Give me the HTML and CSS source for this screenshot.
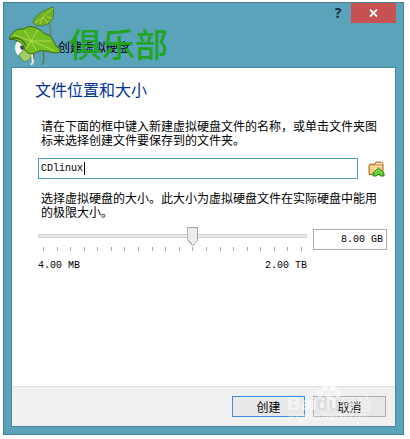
FILE: index.html
```html
<!DOCTYPE html>
<html lang="zh-CN">
<head>
<meta charset="utf-8">
<meta name="viewport" content="width=device-width, initial-scale=1">
<title>创建虚拟硬盘</title>
<link rel="stylesheet" href="styles.css">
</head>
<body>
<main class="window">
  <header class="titlebar">
    <h1 class="caption">创建虚拟硬盘</h1>
    <button class="help" type="button" aria-label="帮助">?</button>
    <button class="close" type="button" aria-label="关闭">
      <svg width="9" height="8" viewBox="0 0 9 8"><path d="M1 0.5L8 7.5M8 0.5L1 7.5" stroke="#fff" stroke-width="1.8"/></svg>
    </button>
    <div class="badge">
      <svg class="lotus" width="54" height="60" viewBox="0 0 54 60">
        <path d="M39 16C43 22 42 30 40 36" fill="none" stroke="#5c8a32" stroke-width="1.2"/>
        <path d="M24 18C26 10 33 6 44 2C45 9 45 15 39 19C34 21 28 22 24 18Z" fill="#72b222" stroke="#416713" stroke-width=".7"/>
        <path d="M25 18C31 16 36 10 44 3M39 18L34 12M31 19L34 12M38 12L43 13" fill="none" stroke="#b0d64b" stroke-width="1"/>
        <ellipse cx="12" cy="43" rx="6" ry="8" fill="#f4f7ed"/>
        <path d="M11 41q4 -2 4 3q-3 3 -4-3Z" fill="#3d4840"/>
        <path d="M10 51C13 44 18 43 22 47C23 54 18 58 14 56Z" fill="#a0cf65" stroke="#477324" stroke-width=".7"/>
        <path d="M34 47C35 52 36 55 33 60" fill="none" stroke="#55752b" stroke-width="1.2"/>
        <path d="M22 44L24 57L22 60" fill="none" stroke="#eee6ce" stroke-width="2"/>
        <path d="M24 44L25 54" fill="none" stroke="#806a40" stroke-width="1"/>
        <path d="M0 34C2 28 7 23 15 24C20 19 29 22 36 29C44 30 44 37 48 42C53 44 52 48 47 48C38 47 33 44 28 47C22 51 16 48 15 42C12 36 5 34 0 34Z" fill="#74bd21" stroke="#294d10" stroke-width=".8"/>
        <path d="M15 25L22 36L29 25M22 36L17 44M22 36L28 46M23 36L46 46M22 36L42 36M22 36L5 30" fill="none" stroke="#b5e052" stroke-width=".9"/>
        <path d="M1 34C8 31 14 34 17 41" fill="none" stroke="#385f16" stroke-width="1.2"/>
      </svg>
      <span class="club">俱乐部</span>
    </div>
  </header>

  <form class="dialog">
    <div class="page">
      <h2 class="heading">文件位置和大小</h2>
      <label class="note" for="location">请在下面的框中键入新建虚拟硬盘文件的名称，或单击文件夹图标来选择创建文件要保存到的文件夹。</label>
      <div class="file-row">
        <div class="field">
          <input class="location" id="location" type="text" value="CDlinux">
          <span class="caret"></span>
        </div>
        <button class="browse" type="button" aria-label="选择文件夹">
          <svg width="17" height="16" viewBox="0 0 17 16">
            <path d="M1 4V13.5H15V2.5L13 1H8L7 3H2Z" fill="#e9ae5b" stroke="#ae713c"/>
            <path d="M2 5H14V12.5H2Z" fill="#f8cd7b"/>
            <path d="M2 5.5H14M3 7.5H12" stroke="#ffe7b0"/>
            <path d="M8 2.5H14" stroke="#fff3d4"/>
            <path d="M5 12L10.5 7L16 12V15H12.5L10.5 13L8.5 15H5Z" fill="#5cc832" stroke="#278017"/>
            <path d="M7 12L10.5 9L14 12" fill="none" stroke="#a9ec74"/>
          </svg>
        </button>
      </div>
      <label class="note" for="slider">选择虚拟硬盘的大小。此大小为虚拟硬盘文件在实际硬盘中能用的极限大小。</label>
      <div class="size-row">
        <div class="scale">
          <input class="slider" id="slider" type="range" min="0" max="19" value="11">
          <div class="ticks">
            <i></i><i></i><i></i><i></i><i></i><i></i><i></i><i></i><i></i><i></i>
            <i></i><i></i><i></i><i></i><i></i><i></i><i></i><i></i><i></i><i></i>
          </div>
          <div class="limits"><span>4.00 MB</span><span>2.00 TB</span></div>
        </div>
        <input class="size" type="text" value="8.00 GB" aria-label="大小">
      </div>
    </div>
    <footer class="actions">
      <button class="action primary" type="button">创建</button>
      <button class="action" type="button">取消</button>
      <div class="watermark">
        <svg class="paw" width="26" height="28" viewBox="0 0 26 28" fill="#fff">
          <ellipse cx="4" cy="12" rx="3" ry="4"/><ellipse cx="9" cy="5" rx="3" ry="4"/>
          <ellipse cx="17" cy="5" rx="3" ry="4"/><ellipse cx="22" cy="12" rx="3" ry="4"/>
          <path d="M13 12C9 12 8 17 4 20C1 25 5 28 9 27H18C23 28 25 24 22 20C18 17 17 12 13 12Z"/>
        </svg>
        <span class="brand">Bai<span class="du">du</span><span class="suffix">经验</span></span>
        <span class="site">jingyan.baidu.com</span>
      </div>
    </footer>
  </form>
</main>
</body>
</html>
```
FILE: styles.css
```css
* { box-sizing: border-box; }

body {
  margin: 0;
  padding: 2px 6px 4px 3px;
  min-height: 100vh;
  display: flex;
  background: #fff;
  color: #000;
  font: 12px/14px "Noto Sans CJK SC", sans-serif;
}

button, input { margin: 0; font: inherit; color: inherit; border-radius: 0; }
h1, h2 { margin: 0; font-weight: 400; }

.window {
  flex: 1;
  display: flex;
  flex-direction: column;
  padding: 0 7px 7px;
  border: 1px solid #4b7f8d;
  background: #5ba3bb;
}

.titlebar {
  position: relative;
  display: flex;
  align-items: flex-start;
  height: 64px;
}

.caption { flex: 1; padding: 37px 0 0 47px; font-size: 12px; line-height: 14px; }

.help {
  width: 20px;
  height: 20px;
  margin-right: 3px;
  padding: 0;
  border: 0;
  background: none;
  color: #172c33;
  font: bold 14px/20px "Open Sans", sans-serif;
}

.close {
  display: flex;
  align-items: center;
  justify-content: center;
  width: 45px;
  height: 20px;
  padding: 0;
  border: 0;
  background: #c75050;
}

.badge { position: absolute; left: -2px; top: 2px; display: flex; }
.lotus { flex: none; }

.club {
  margin: 18px 0 0 6px;
  color: #1fa51f;
  font-size: 33px;
  font-weight: 500;
  line-height: 40px;
}

.dialog {
  flex: 1;
  display: flex;
  flex-direction: column;
  border: 1px solid #4b8798;
  background: #fff;
}

.page { flex: 1; padding: 11px 8px 0 26px; }

.heading {
  margin-left: -3px;
  color: #003399;
  font-size: 16px;
  line-height: 20px;
}

.note { display: block; margin: 20px 0 0 3px; padding-right: 8px; }

.file-row { display: flex; align-items: center; gap: 8px; margin-top: 11px; }
.file-row + .note { margin-top: 12px; }

.field { position: relative; flex: 1; }

.location, .size {
  display: block;
  height: 21px;
  background: #fff;
  font: 10px/14px "Liberation Mono", monospace;
  outline: 0;
}

.location { width: 100%; padding: 0 2px; border: 1px solid #4f9bc9; }
.caret { position: absolute; left: 46px; top: 4px; width: 1px; height: 13px; background: #000; }

.browse {
  display: flex;
  width: 21px;
  padding: 0 2px;
  border: 0;
  background: none;
}

.browse svg { flex: none; }

.size-row { display: flex; align-items: flex-start; gap: 6px; margin-top: 7px; }
.scale { flex: 1; }

.slider {
  appearance: none;
  display: block;
  width: 100%;
  height: 20px;
  background: none;
  outline: 0;
}

.slider::-webkit-slider-runnable-track {
  height: 4px;
  border: 1px solid #d6d6d6;
  background: #e7eaea;
}

.slider::-webkit-slider-thumb {
  appearance: none;
  width: 11px;
  height: 19px;
  margin-top: -8px;
  border: 1px solid #a5a5a5;
  background:
    linear-gradient(to top right, #a5a5a5 62%, #ebebeb 62%) left bottom / 50% 6px no-repeat border-box,
    linear-gradient(to top left, #a5a5a5 62%, #ebebeb 62%) right bottom / 50% 6px no-repeat border-box,
    #ebebeb;
  clip-path: polygon(0 0, 100% 0, 100% 68%, 50% 100%, 0 68%);
}

.ticks { display: flex; justify-content: space-between; padding: 0 5px; margin-top: 1px; }
.ticks i { width: 1px; height: 4px; background: #a5a5a5; }

.limits {
  display: flex;
  justify-content: space-between;
  margin-top: 8px;
  font: 10px/14px "Liberation Mono", monospace;
}

.size { width: 74px; margin-top: 3px; padding: 0 3px; border: 1px solid #ababb3; text-align: right; }

.actions {
  position: relative;
  display: flex;
  justify-content: flex-end;
  gap: 8px;
  padding: 9px 9px;
  border-top: 1px solid #dfdfdf;
  background: #f0f0f0;
}

.action {
  width: 73px;
  height: 21px;
  padding: 0;
  border: 1px solid #acacac;
  background: #e8e8e8;
  line-height: 19px;
}

.primary { border-color: #3b8ee0; }

.watermark {
  position: absolute;
  right: 22px;
  top: -5px;
  width: 86px;
  height: 40px;
  opacity: .6;
  color: #fff;
  pointer-events: none;
}

.paw { position: absolute; left: 29px; top: 0; }
.brand { position: absolute; left: 0; top: 11px; font: bold 19px/20px "Liberation Sans", sans-serif; white-space: nowrap; }
.du { color: #d4d4d4; }
.suffix { font: 16px/20px "Noto Sans CJK SC", sans-serif; }
.site { position: absolute; left: 1px; top: 29px; font: 10px/12px "Liberation Sans", sans-serif; }
```
